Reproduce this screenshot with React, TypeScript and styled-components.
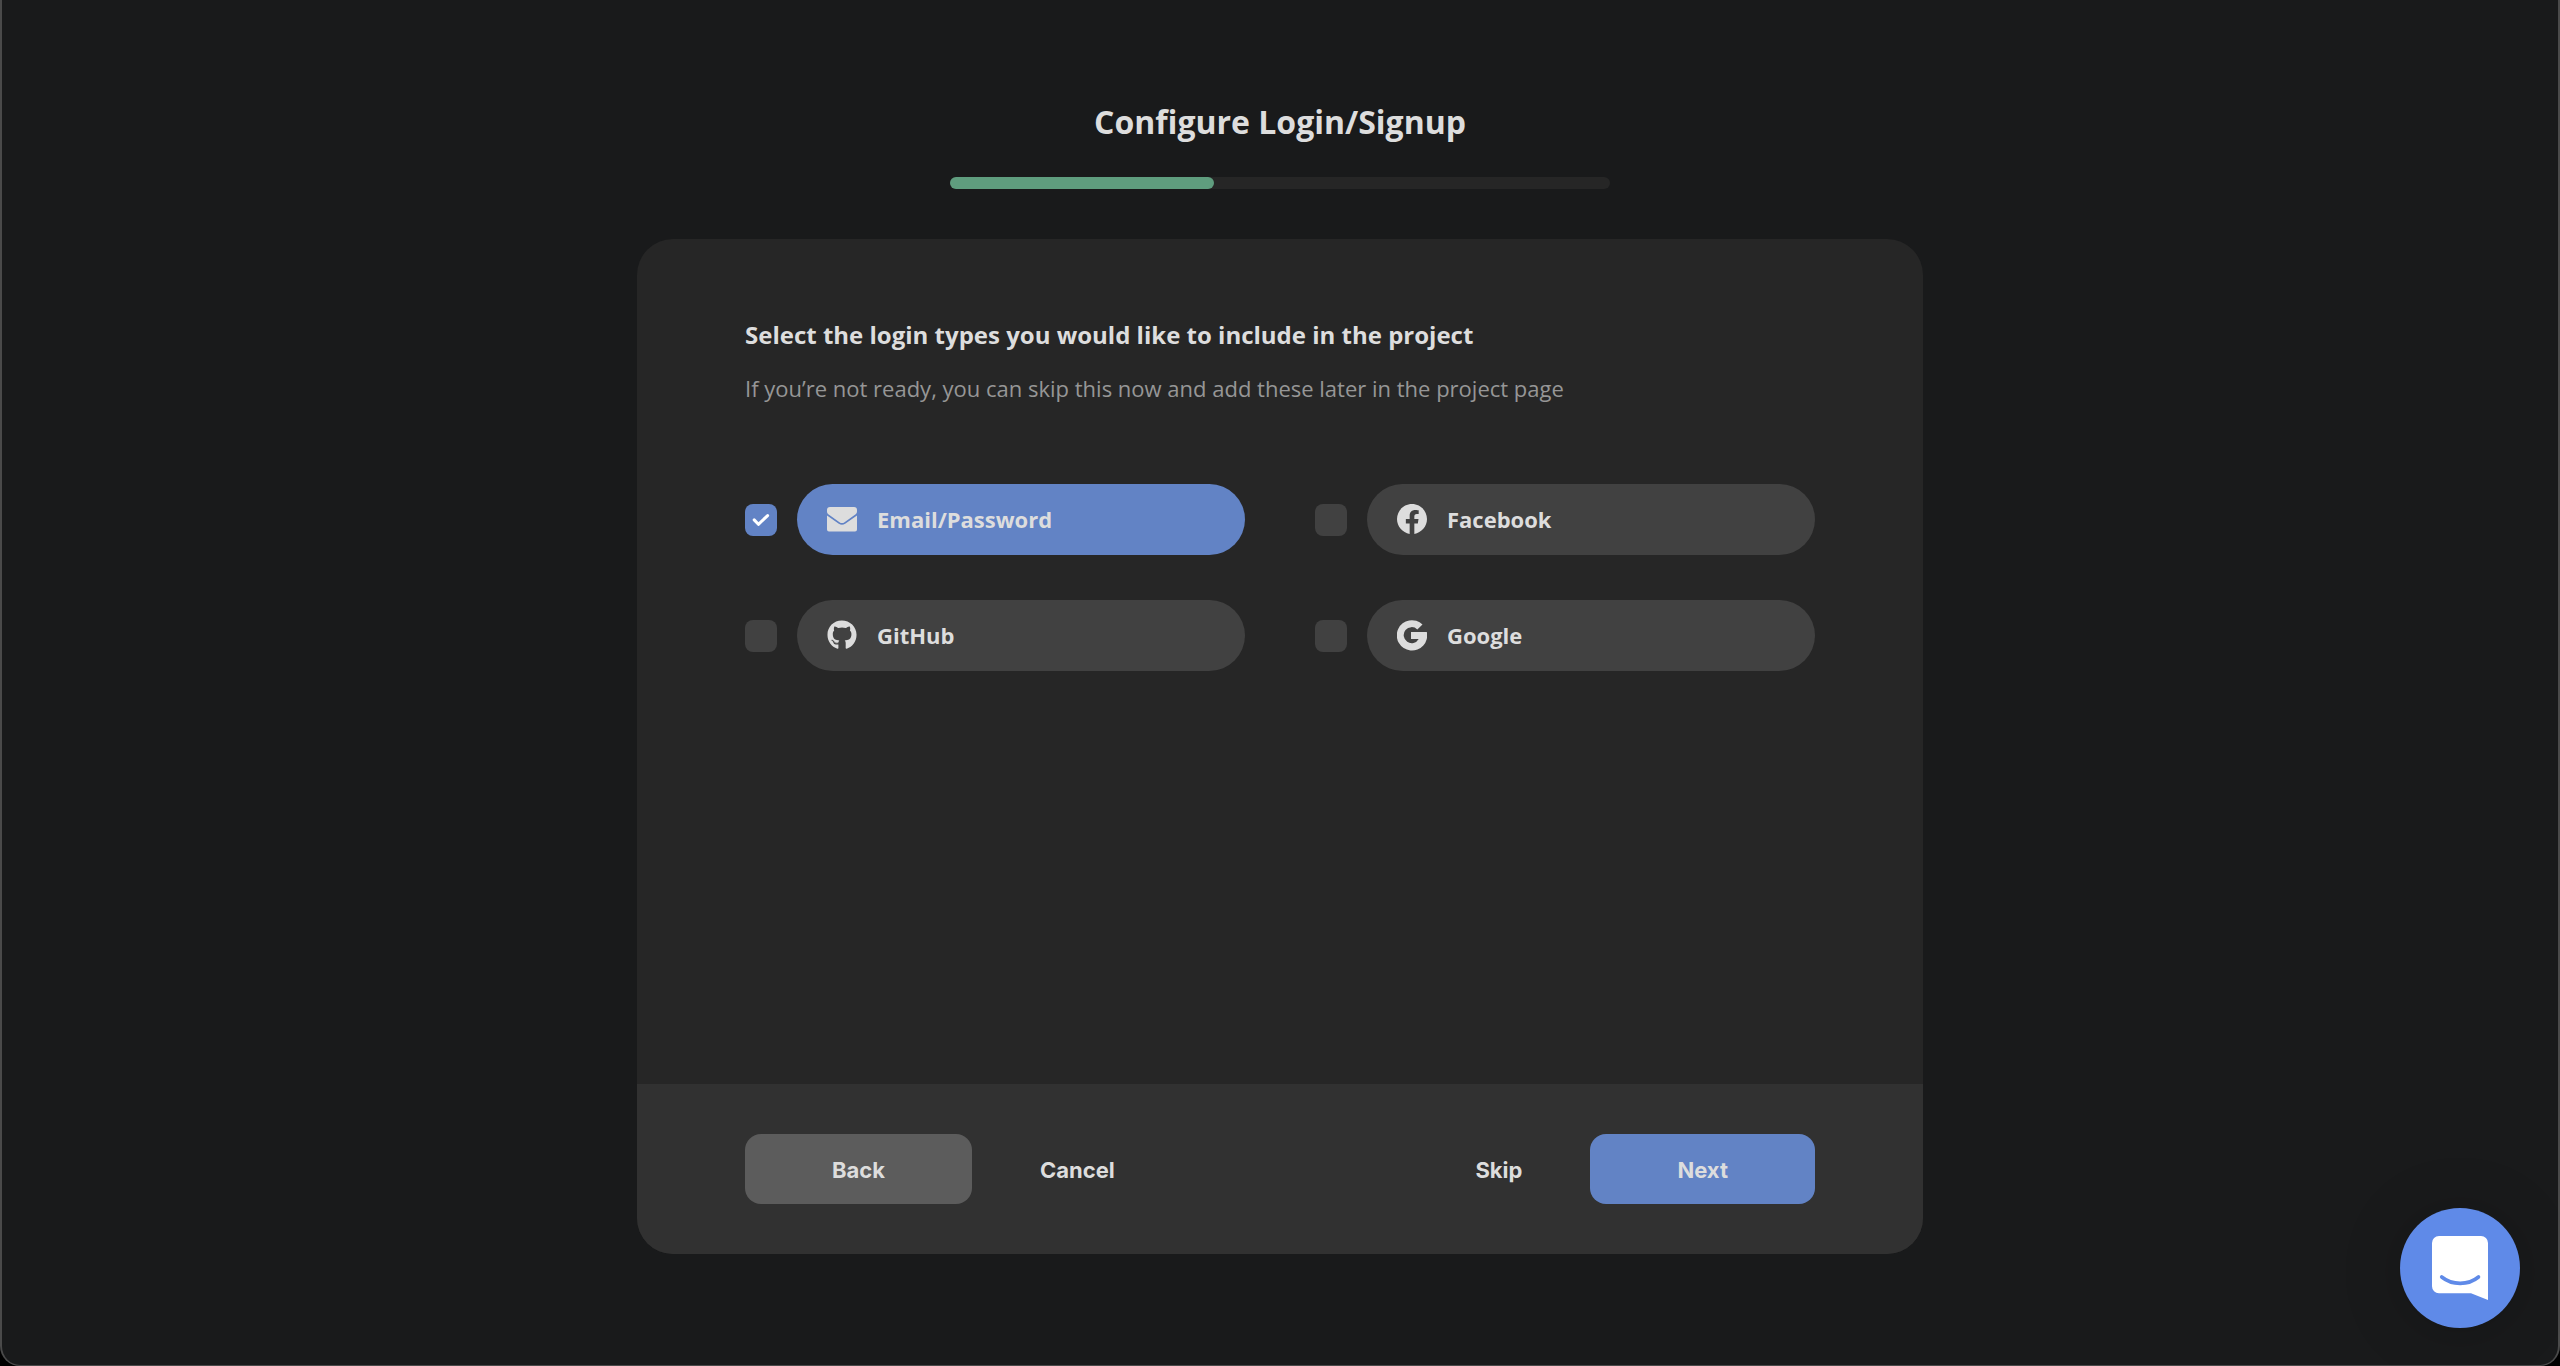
import React, { useState } from "react";
import styled, { createGlobalStyle } from "styled-components";
import { FaGithub } from "react-icons/fa6";

const color = {
  backdrop: "#000000",
  page: "#191a1b",
  edge: "#4a4a4a",
  panel: "#262626",
  footer: "#313131",
  control: "#414141",
  neutral: "#5c5c5c",
  primary: "#6283c5",
  progress: "#5f9d7e",
  text: "#dddddd",
  muted: "#969696",
  launcher: "#5f8ae8",
};

const GlobalStyle = createGlobalStyle`
  *, *::before, *::after { box-sizing: border-box; }
  body {
    margin: 0;
    background: ${color.backdrop};
    color: ${color.text};
    font-family: "Open Sans", sans-serif;
  }
`;

const Page = styled.main`
  display: flex;
  flex-direction: column;
  align-items: center;
  min-height: 100vh;
  padding: 100px 24px;
  background: ${color.page};
  border: 2px solid ${color.edge};
  border-top: 0;
  border-bottom-width: 1px;
  border-radius: 0 0 20px 20px;
`;

const Title = styled.h1`
  margin: 0;
  font-size: 32px;
  line-height: 44px;
  font-weight: 700;
`;

const ProgressTrack = styled.div`
  width: 100%;
  max-width: 660px;
  height: 12px;
  margin: 33px 0 50px;
  border-radius: 6px;
  background: ${color.panel};
`;

const ProgressFill = styled.div`
  height: 100%;
  border-radius: 6px;
  background: ${color.progress};
`;

const Card = styled.form`
  display: flex;
  flex-direction: column;
  width: 100%;
  max-width: 1286px;
  border-radius: 36px;
  overflow: hidden;
  background: ${color.panel};
`;

const CardBody = styled.section`
  min-height: 845px;
  padding: 80px 108px;
`;

const Heading = styled.h2`
  margin: 0;
  font-size: 24px;
  line-height: 32px;
  font-weight: 700;
`;

const Description = styled.p`
  margin: 21px 0 80px;
  font-size: 22px;
  line-height: 32px;
  color: ${color.muted};
`;

const Options = styled.div`
  display: grid;
  grid-template-columns: 1fr 1fr;
  gap: 45px 70px;
`;

const Option = styled.label`
  display: flex;
  align-items: center;
  gap: 20px;
  cursor: pointer;
`;

const Tick = styled.span`
  display: grid;
  flex: none;
  width: 32px;
  height: 32px;

  > * {
    grid-area: 1 / 1;
  }

  svg {
    z-index: 1;
    pointer-events: none;
  }
`;

const TickInput = styled.input`
  appearance: none;
  width: 32px;
  height: 32px;
  margin: 0;
  border-radius: 8px;
  background: ${color.control};
  cursor: pointer;

  &:checked {
    background: ${color.primary};
  }
`;

const Pill = styled.span<{ $active: boolean }>`
  display: flex;
  flex: 1;
  align-items: center;
  gap: 20px;
  height: 71px;
  padding: 0 30px 1px;
  border-radius: 36px;
  background: ${(p) => (p.$active ? color.primary : color.control)};
  font-size: 22px;
  line-height: 32px;
  font-weight: 700;
`;

const CardFooter = styled.footer`
  display: flex;
  align-items: center;
  gap: 68px;
  padding: 50px 108px;
  background: ${color.footer};
`;

const Button = styled.button<{ $fill?: string }>`
  height: 70px;
  padding: 2px ${(p) => (p.$fill ? "87px" : "0")} 0;
  border: 0;
  border-radius: 16px;
  background: ${(p) => p.$fill ?? "transparent"};
  color: ${color.text};
  font-family: Inter, sans-serif;
  font-size: 22px;
  line-height: 32px;
  font-weight: 700;
  cursor: pointer;
`;

const Spacer = styled.div`
  flex: 1;
`;

const Launcher = styled.button`
  position: fixed;
  right: 40px;
  bottom: 38px;
  display: grid;
  place-items: center;
  width: 120px;
  height: 120px;
  padding: 0;
  border: 0;
  border-radius: 50%;
  background: ${color.launcher};
  box-shadow: 0 2px 12px rgba(0, 0, 0, 0.06), 0 4px 64px rgba(0, 0, 0, 0.16);
  cursor: pointer;
`;

const CheckIcon = () => (
  <svg width="32" height="32" viewBox="0 0 32 32" aria-hidden="true">
    <path
      d="M9.200 15.900L13.400 20.300L22.600 11.600"
      fill="none"
      stroke="#ffffff"
      strokeWidth="3"
      strokeLinecap="round"
      strokeLinejoin="round"
    />
  </svg>
);

const EnvelopeIcon = () => (
  <svg width="30" height="25" viewBox="0 0 30 25" fill="currentColor" aria-hidden="true">
    <path d="M3 0H27a3 3 0 0 1 3 3V4.600C30 5.800 29.300 6.900 28.300 7.600L17.500 15.200Q15 17 12.500 15.200L1.700 7.600C.7 6.900 0 5.800 0 4.600V3a3 3 0 0 1 3-3z" />
    <path d="M0 8.500L11.800 16.800Q15 18.900 18.200 16.800L30 8.500V22.500a2 2 0 0 1-2 2H2a2 2 0 0 1-2-2z" />
  </svg>
);

const FacebookIcon = () => (
  <svg width="30" height="30" viewBox="0 0 24 24" fill="currentColor" aria-hidden="true">
    <path d="M24 12.073c0-6.627-5.373-12-12-12s-12 5.373-12 12c0 5.990 4.388 10.954 10.125 11.854v-8.385H7.078v-3.470h3.047V9.430c0-3.007 1.792-4.669 4.533-4.669 1.312 0 2.686.235 2.686.235v2.953H15.830c-1.491 0-1.956.925-1.956 1.874v2.250h3.328l-.532 3.470h-2.796v8.385C19.612 23.027 24 18.062 24 12.073z" />
  </svg>
);

const GithubIcon = () => <FaGithub size={30} aria-hidden />;

const GoogleIcon = () => (
  <svg width="30" height="31" viewBox="0 0 30 31" fill="currentColor" aria-hidden="true">
    <path d="M25.500 4.400A15.200 15.200 0 1 0 29.800 12H14V19H21.700A8 8 0 1 1 20.300 9.400z" />
  </svg>
);

type Provider = { id: string; name: string; icon: () => React.ReactElement };

const providers: Provider[] = [
  { id: "email", name: "Email/Password", icon: EnvelopeIcon },
  { id: "facebook", name: "Facebook", icon: FacebookIcon },
  { id: "github", name: "GitHub", icon: GithubIcon },
  { id: "google", name: "Google", icon: GoogleIcon },
];

export default function App() {
  const [selected, setSelected] = useState<string[]>(["email"]);
  const progress = 40;

  const toggle = (id: string) =>
    setSelected((now) =>
      now.includes(id) ? now.filter((x) => x !== id) : [...now, id]
    );

  return (
    <>
      <GlobalStyle />
      <Page>
        <Title>Configure Login/Signup</Title>
        <ProgressTrack
          role="progressbar"
          aria-label="Setup progress"
          aria-valuenow={progress}
          aria-valuemin={0}
          aria-valuemax={100}
        >
          <ProgressFill style={{ width: `${progress}%` }} />
        </ProgressTrack>
        <Card onSubmit={(e) => e.preventDefault()}>
          <CardBody>
            <Heading>
              Select the login types you would like to include in the project
            </Heading>
            <Description>
              If you’re not ready, you can skip this now and add these later in
              the project page
            </Description>
            <Options>
              {providers.map(({ id, name, icon: Icon }) => {
                const active = selected.includes(id);
                return (
                  <Option key={id} htmlFor={id}>
                    <Tick>
                      <TickInput
                        id={id}
                        type="checkbox"
                        checked={active}
                        onChange={() => toggle(id)}
                      />
                      {active && <CheckIcon />}
                    </Tick>
                    <Pill $active={active}>
                      <Icon />
                      {name}
                    </Pill>
                  </Option>
                );
              })}
            </Options>
          </CardBody>
          <CardFooter>
            <Button type="button" $fill={color.neutral}>
              Back
            </Button>
            <Button type="button">Cancel</Button>
            <Spacer />
            <Button type="button">Skip</Button>
            <Button type="submit" $fill={color.primary}>
              Next
            </Button>
          </CardFooter>
        </Card>
      </Page>
      <Launcher type="button" aria-label="Open chat">
        <svg width="56" height="64" viewBox="0 0 56 64" aria-hidden="true">
          <path
            d="M7 0H49a7 7 0 0 1 7 7V64L39 57.300H7a7 7 0 0 1-7-7V7a7 7 0 0 1 7-7z"
            fill="#ffffff"
          />
          <path
            d="M9.700 41c10.500 8.500 26.500 8.500 36.800 0"
            fill="none"
            stroke={color.launcher}
            strokeWidth="3.600"
            strokeLinecap="round"
          />
        </svg>
      </Launcher>
    </>
  );
}
